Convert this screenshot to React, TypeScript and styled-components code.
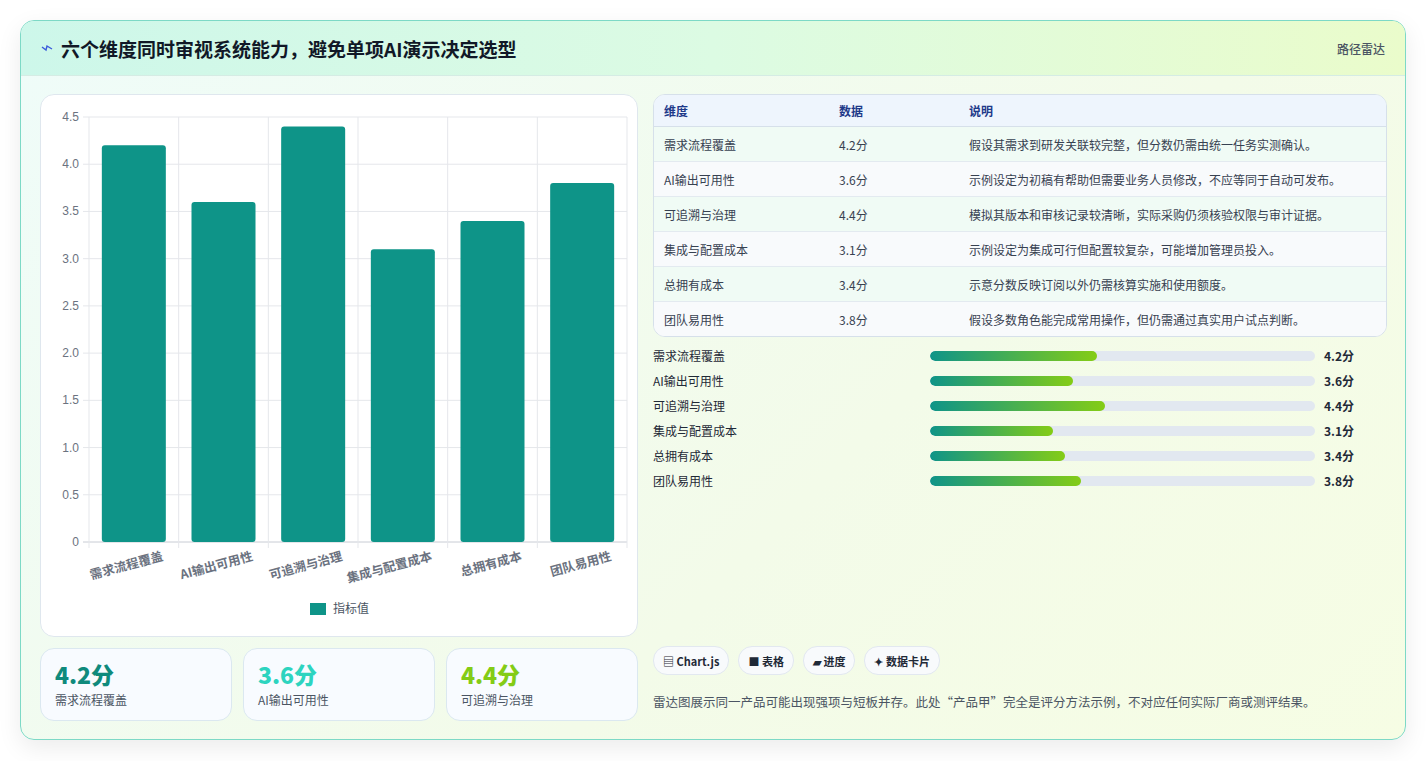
import React from "react";
import styled, { createGlobalStyle } from "styled-components";

const G = createGlobalStyle`
  html,body{margin:0;background:#f3f4f6;}
  body{font-family:"Noto Sans CJK SC","Noto Sans",sans-serif;}
`;
const Page = styled.div`padding:20px 20px 21px 20px;background:#fff;height:761px;box-sizing:border-box;`;
const Card = styled.div`
  border:1px solid #7dd9c6;border-radius:14px;overflow:hidden;height:720px;box-sizing:border-box;
  background:linear-gradient(135deg,#effcf9 0%,#f3fbe9 60%,#f6fde4 100%);
  box-shadow:0 8px 24px rgba(0,0,0,0.08);display:flex;flex-direction:column;
`;
const Header = styled.div`
  height:54px;flex:none;display:flex;align-items:center;justify-content:space-between;padding:0 20px;
  background:linear-gradient(90deg,#cdf7ea 0%,#dcfbe3 50%,#eafccb 100%);border-bottom:1px solid #d5ece4;
`;
const Title = styled.h1`margin:0;font-size:19px;font-weight:700;color:#111827;display:flex;align-items:center;gap:8px;`;
const Tag = styled.span`font-size:12px;color:#4b5563;font-weight:500;`;
const Body = styled.div`display:grid;grid-template-columns:598px 1fr;gap:15px;padding:18px 18px 18px 19px;flex:1;`;
const Col = styled.div`display:flex;flex-direction:column;gap:11px;`;
const ChartBox = styled.div`background:#fff;border:1px solid #dfe7ee;border-radius:14px;height:543px;box-sizing:border-box;`;
const Stats = styled.div`display:grid;grid-template-columns:repeat(3,1fr);gap:11px;`;
const Stat = styled.div`background:#f8fbff;border:1px solid #dbe8f0;border-radius:14px;height:73px;box-sizing:border-box;padding:10px 14px;`;
const StatNum = styled.div<{c:string}>`font-size:23px;font-weight:800;color:${p=>p.c};line-height:30px;font-family:"Noto Sans CJK SC",sans-serif;`;
const StatLbl = styled.div`font-size:12px;color:#4b5563;margin-top:2px;`;
const Table = styled.table`width:100%;border-collapse:collapse;font-size:12px;color:#374151;`;
const TWrap = styled.div`border:1px solid #d6e0ea;border-radius:12px;overflow:hidden;background:#fff;`;
const Th = styled.th`text-align:left;font-weight:600;color:#1e3a8a;background:#eef5fd;height:31px;padding:0 10px;border-bottom:1px solid #d6e0ea;`;
const Tr = styled.tr<{alt:boolean}>`background:${p=>p.alt?"#f8fafc":"#f0fbf5"};`;
const Td = styled.td`height:34px;padding:0 10px;border-top:1px solid #e3eaf0;`;
const Bars = styled.div`display:flex;flex-direction:column;gap:8px;margin-top:10px;`;
const BarRow = styled.div`display:grid;grid-template-columns:277px 385px 1fr;align-items:center;height:17px;font-size:12px;color:#1f2937;`;
const Track = styled.div`height:10px;border-radius:5px;background:#e2e8f0;overflow:hidden;`;
const Fill = styled.div`height:100%;border-radius:5px;background:linear-gradient(90deg,#0f9488,#84cc16);`;
const Val = styled.span`font-weight:700;padding-left:9px;`;
const Spacer = styled.div`flex:1;`;
const Chips = styled.div`display:flex;gap:9px;`;
const Chip = styled.span`font-size:11px;font-weight:600;color:#1f2937;background:#f8fafc;border:1px solid #e2e8f0;border-radius:14px;height:27px;padding:0 9px;display:flex;align-items:center;gap:3px;`;
const Note = styled.p`margin:17px 0 10px;font-size:12.5px;color:#4b5563;`;

const data = [
  ["需求流程覆盖", 4.2, "假设其需求到研发关联较完整，但分数仍需由统一任务实测确认。"],
  ["AI输出可用性", 3.6, "示例设定为初稿有帮助但需要业务人员修改，不应等同于自动可发布。"],
  ["可追溯与治理", 4.4, "模拟其版本和审核记录较清晰，实际采购仍须核验权限与审计证据。"],
  ["集成与配置成本", 3.1, "示例设定为集成可行但配置较复杂，可能增加管理员投入。"],
  ["总拥有成本", 3.4, "示意分数反映订阅以外仍需核算实施和使用额度。"],
  ["团队易用性", 3.8, "假设多数角色能完成常用操作，但仍需通过真实用户试点判断。"],
] as [string, number, string][];

function Chart() {
  const x0 = 48, x1 = 586, y0 = 22, y1 = 447;
  const u = (y1 - y0) / 4.5, cw = (x1 - x0) / 6;
  const ticks = [0, 0.5, 1, 1.5, 2, 2.5, 3, 3.5, 4, 4.5];
  return (
    <svg width="598" height="543" viewBox="0 0 598 543">
      {ticks.map(t => (
        <g key={t}>
          <line x1={x0 - 6} x2={x1} y1={y1 - t * u} y2={y1 - t * u} stroke={t === 0 ? "#c8ccd4" : "#e5e7eb"} />
          <text x={x0 - 10} y={y1 - t * u + 4} fontSize="12" fill="#6b7280" textAnchor="end" fontFamily="Liberation Sans, sans-serif">{t === 0 ? "0" : t.toFixed(1)}</text>
        </g>
      ))}
      {Array.from({ length: 7 }).map((_, i) => (
        <line key={i} x1={x0 + i * cw} x2={x0 + i * cw} y1={y0} y2={y1 + 6} stroke="#e5e7eb" />
      ))}
      {data.map(([n, v], i) => {
        const cx = x0 + cw * (i + 0.5);
        return (
          <g key={n}>
            <rect x={cx - 32} y={y1 - v * u} width="64" height={v * u} rx="3" fill="#0e9488" />
            <text transform={`translate(${cx + 30},${y1 + 18}) rotate(-15)`} fontSize="12.5" fontWeight="600" fill="#6b7280" textAnchor="end">{n}</text>
          </g>
        );
      })}
      <rect x="269" y="508" width="16" height="12" fill="#0e9488" />
      <text x="292" y="518" fontSize="12" fill="#4b5563">指标值</text>
    </svg>
  );
}

export default function App() {
  return (
    <Page>
      <G />
      <Card>
        <Header>
          <Title>
            <svg width="12" height="10" viewBox="0 0 12 10"><path d="M1 4 L5 7 L6 3 L11 6" stroke="#3b5bdb" strokeWidth="1.4" fill="none" /></svg>
            六个维度同时审视系统能力，避免单项AI演示决定选型
          </Title>
          <Tag>路径雷达</Tag>
        </Header>
        <Body>
          <Col>
            <ChartBox><Chart /></ChartBox>
            <Stats>
              <Stat><StatNum c="#0f8a7c">4.2分</StatNum><StatLbl>需求流程覆盖</StatLbl></Stat>
              <Stat><StatNum c="#2dd4bf">3.6分</StatNum><StatLbl>AI输出可用性</StatLbl></Stat>
              <Stat><StatNum c="#84cc16">4.4分</StatNum><StatLbl>可追溯与治理</StatLbl></Stat>
            </Stats>
          </Col>
          <Col style={{ gap: 0 }}>
            <TWrap>
              <Table>
                <thead><tr><Th style={{ width: 155 }}>维度</Th><Th style={{ width: 110 }}>数据</Th><Th>说明</Th></tr></thead>
                <tbody>
                  {data.map(([n, v, d], i) => (
                    <Tr key={n} alt={i % 2 === 1}><Td>{n}</Td><Td>{v}分</Td><Td>{d}</Td></Tr>
                  ))}
                </tbody>
              </Table>
            </TWrap>
            <Bars>
              {data.map(([n, v]) => (
                <BarRow key={n}>
                  <span>{n}</span>
                  <Track><Fill style={{ width: `${(v / 9.7) * 100}%` }} /></Track>
                  <Val>{v}分</Val>
                </BarRow>
              ))}
            </Bars>
            <Spacer />
            <Chips>
              <Chip>▤ Chart.js</Chip>
              <Chip>■ 表格</Chip>
              <Chip>▰ 进度</Chip>
              <Chip>✦ 数据卡片</Chip>
            </Chips>
            <Note>雷达图展示同一产品可能出现强项与短板并存。此处“产品甲”完全是评分方法示例，不对应任何实际厂商或测评结果。</Note>
          </Col>
        </Body>
      </Card>
    </Page>
  );
}
